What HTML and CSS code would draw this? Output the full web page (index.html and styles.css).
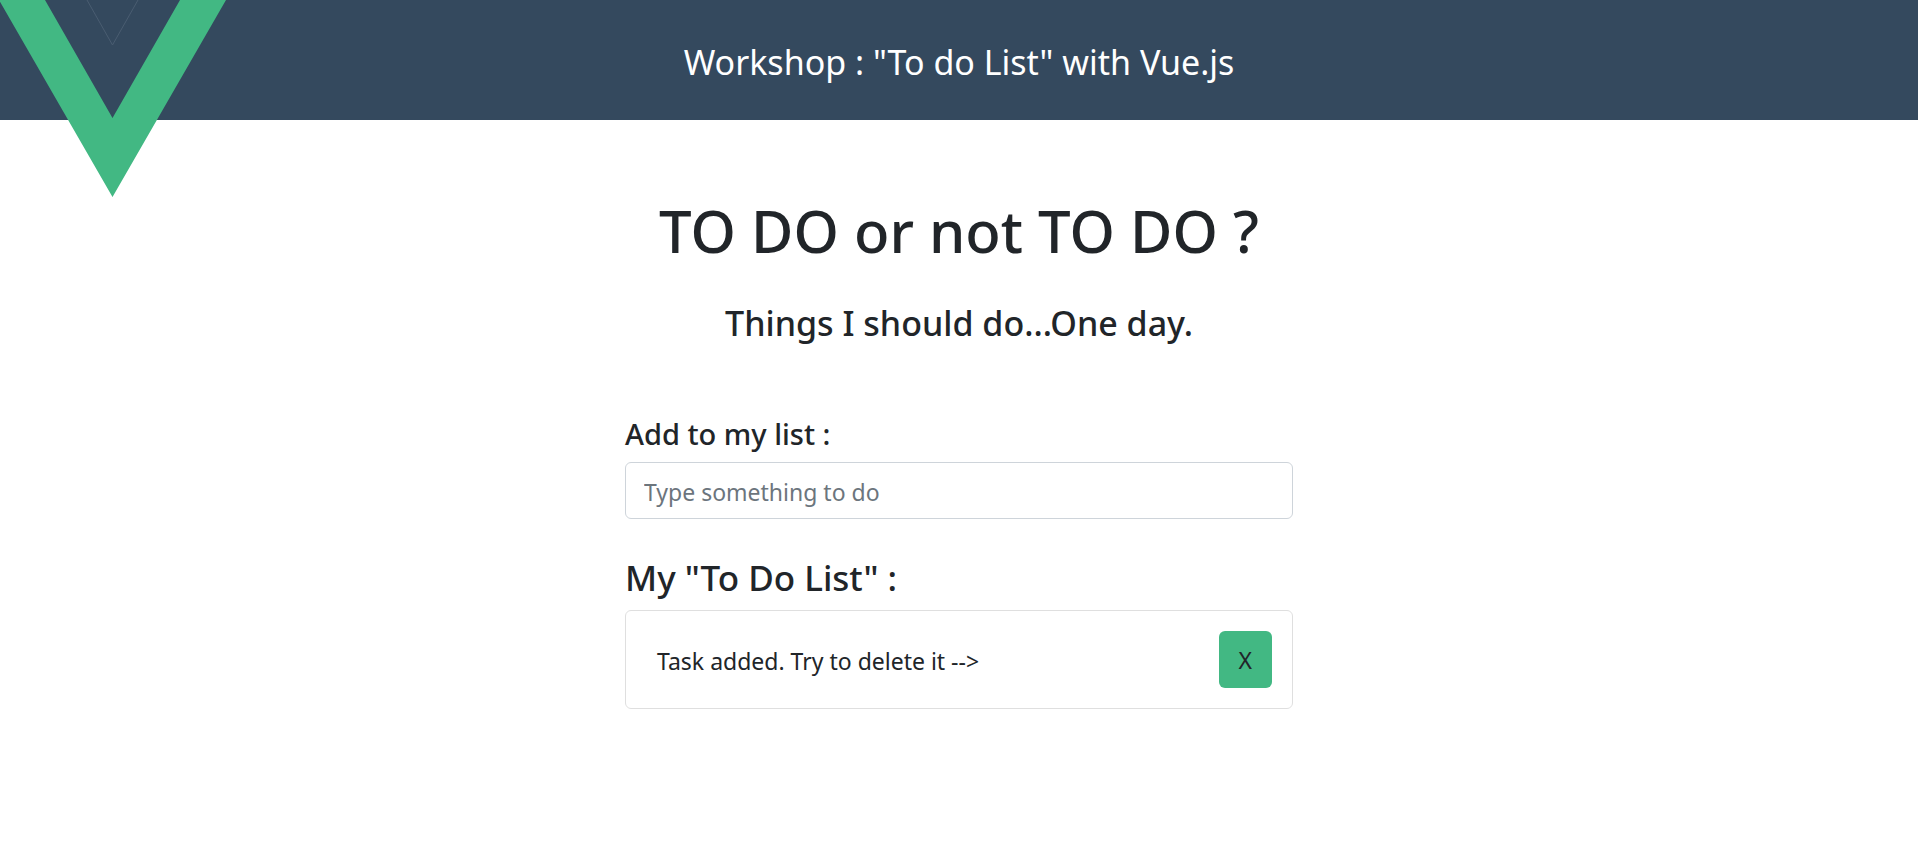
FILE: index.html
```html
<!DOCTYPE html>
<html lang="en">
<head>
  <meta charset="utf-8">
  <meta name="viewport" content="width=device-width, initial-scale=1">
  <title>To do List</title>
  <link rel="stylesheet" href="styles.css">
</head>
<body>
  <header class="banner">
    <svg class="logo" viewBox="0 0 226 197" width="226" height="197" role="img" aria-label="Vue logo">
      <path fill="#34495e" d="M45 0H180L112.500 118Z"/>
      <path fill="none" stroke="#4a5d71" d="M87 0L112.500 45L138 0"/>
      <path fill="#42b883" d="M-1 0H45L112.500 118L180 0H226L112.500 197Z"/>
    </svg>
    <p class="banner-title">Workshop : "To do List" with Vue.js</p>
  </header>
  <main class="content">
    <h1 class="title">TO DO or not TO DO ?</h1>
    <h2 class="subtitle">Things I should do...One day.</h2>
    <form class="add-form">
      <label class="add-label" for="task">Add to my list :</label>
      <input class="add-input" id="task" type="text" placeholder="Type something to do">
    </form>
    <section>
      <h2 class="list-title">My "To Do List" :</h2>
      <ul class="list">
        <li class="item">
          <span class="item-text">Task added. Try to delete it --&gt;</span>
          <button class="delete" type="button">X</button>
        </li>
      </ul>
    </section>
  </main>
</body>
</html>
```
FILE: styles.css
```css
* {
  box-sizing: border-box;
}

body {
  margin: 0;
  background: #fff;
  color: #212529;
  font-family: "Segoe UI", "Noto Sans", "Open Sans", sans-serif;
  font-size: 23px;
  line-height: 36px;
}

h1,
h2,
p,
ul {
  margin: 0;
  padding: 0;
}

.banner {
  position: relative;
  display: flex;
  justify-content: center;
  padding: 35px 24px 31px;
  background: #34495e;
  color: #fff;
}

.logo {
  position: absolute;
  top: 0;
  left: 0;
}

.banner-title {
  font-size: 34px;
  line-height: 54px;
}

.content {
  max-width: 668px;
  margin: 0 auto;
  padding-top: 75px;
}

.title,
.subtitle {
  font-weight: 500;
  text-align: center;
}

.title {
  font-size: 58px;
  line-height: 72px;
}

.subtitle {
  margin-top: 34px;
  font-size: 34px;
  line-height: 44px;
}

.add-form {
  display: flex;
  flex-direction: column;
  gap: 10px;
  margin-top: 71px;
}

.add-label {
  font-size: 29px;
  font-weight: 500;
  line-height: 36px;
}

.add-input {
  width: 100%;
  padding: 11px 18px 7px;
  border: 1px solid #ced4da;
  border-radius: 6px;
  background: #fff;
  color: #212529;
  font: inherit;
  line-height: 37px;
}

.add-input::placeholder {
  color: #6c757d;
  opacity: 1;
}

.list-title {
  margin-top: 37px;
  font-size: 35px;
  font-weight: 500;
  line-height: 44px;
}

.list {
  margin-top: 10px;
  list-style: none;
}

.item {
  display: flex;
  align-items: center;
  justify-content: space-between;
  padding: 20px 20px 20px 31px;
  border: 1px solid #dfdfdf;
  border-radius: 6px;
}

.item-text {
  padding-top: 2px;
}

.delete {
  padding: 11px 20px 9px;
  border: 0;
  border-radius: 6px;
  background: #42b883;
  color: #212529;
  font: inherit;
  line-height: 37px;
}
```
